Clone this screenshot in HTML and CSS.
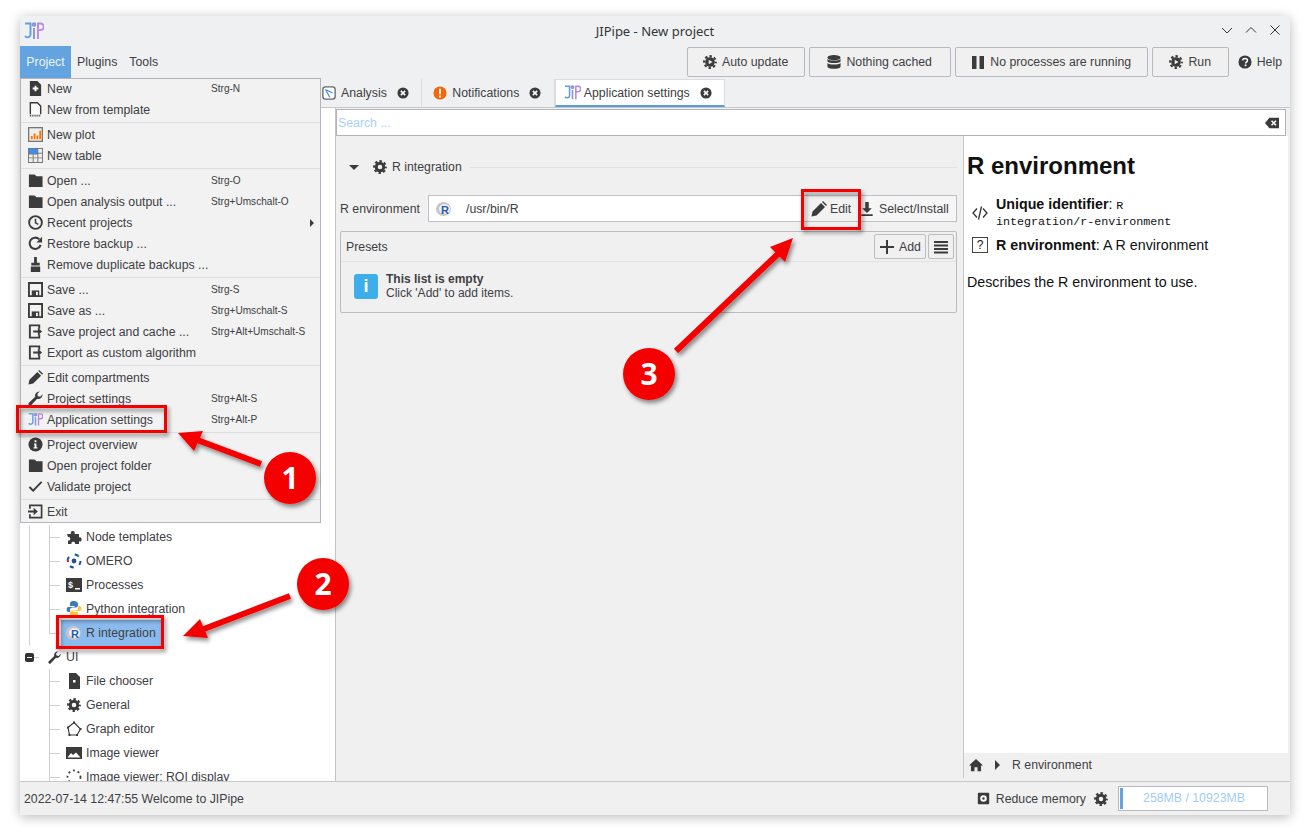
FILE: index.html
```html
<!DOCTYPE html>
<html lang="en">
<head>
  <meta charset="UTF-8" />
  <title>JIPipe - New project</title>
  <link rel="stylesheet" href="styles.css">
</head>
<body>
  <!-- icon set -->
  <svg class="sprite" width="0" height="0">
    <symbol id="i-logo" viewBox="0 0 20 18">
      <g fill="none" stroke-width="1.900">
        <path d="M1 1.500h5.500v11a3 3 0 0 1-5.500 1.500" stroke="#5f9fe0"/>
        <path d="M10 6v11" stroke="#8b8fe0"/>
        <circle cx="10" cy="2.600" r="1.300" stroke="#8b8fe0"/>
        <path d="M14 17V1.500h2.500a3.200 3.200 0 0 1 0 6.600H14" stroke="#b48be0"/>
      </g>
    </symbol>
    <symbol id="i-new" viewBox="0 0 16 16">
      <path d="M2 0h8l4 4v12H2z" fill="#3b3b3b"/>
      <path d="M7 5h2v2h2v2H9v2H7V9H5V7h2z" fill="#fff"/>
    </symbol>
    <symbol id="i-template" viewBox="0 0 16 16">
      <path d="M2.500 13V.8h7.500l3.500 3.500V13" fill="#fff" stroke="#3b3b3b" stroke-width="1.500"/>
      <path d="M2 14.500h12" stroke="#3b3b3b" stroke-width="2" stroke-dasharray="1 1"/>
    </symbol>
    <symbol id="i-plot" viewBox="0 0 16 16">
      <rect x=".7" y=".7" width="14.600" height="14.600" fill="#eee" stroke="#777" stroke-width="1.400"/>
      <path d="M3 9.500h2V13H3zM6 7h2v6H6zM9 9h2v4H9zM12 4h2v9h-2z" fill="#f57900"/>
    </symbol>
    <symbol id="i-table" viewBox="0 0 16 16">
      <rect width="16" height="16" fill="#777"/>
      <path d="M1 1h9v5H1z" fill="#3d8df0"/>
      <path d="M11 1h4v4h-4zM11 6h4v4h-4zM11 11h4v4h-4zM1 7h4v3H1zM6 7h4v3H6zM1 11h4v4H1zM6 11h4v4H6z" fill="#eee"/>
    </symbol>
    <symbol id="i-folder" viewBox="0 0 16 16">
      <path d="M1 1.500h6l2 2h6.500v11.500H1z" fill="#3b3b3b"/>
    </symbol>
    <symbol id="i-clock" viewBox="0 0 16 16">
      <circle cx="8" cy="8" r="6.800" fill="none" stroke="#3b3b3b" stroke-width="2"/>
      <path d="M8 4v4.300l3 1.700" fill="none" stroke="#3b3b3b" stroke-width="1.600"/>
    </symbol>
    <symbol id="i-restore" viewBox="0 0 16 16">
      <path d="M13.500 9.500A6 6 0 1 1 12 3.500" fill="none" stroke="#3b3b3b" stroke-width="2.200"/>
      <path d="M15 .8v6.200H9z" fill="#3b3b3b"/>
    </symbol>
    <symbol id="i-broom" viewBox="0 0 16 16">
      <path d="M6.500 0h3v6h-3zM3.500 6h9v3h-9zM3 10h10v6H3z" fill="#3b3b3b"/>
    </symbol>
    <symbol id="i-save" viewBox="0 0 16 16">
      <path d="M1 1h14v14H1z" fill="none" stroke="#3b3b3b" stroke-width="2"/>
      <path d="M4 9h8v6H4z" fill="#3b3b3b"/>
      <path d="M8.500 10.500h2V14h-2z" fill="#fff"/>
    </symbol>
    <symbol id="i-export" viewBox="0 0 16 16">
      <path d="M12 5V1.500H2v13h10V11" fill="none" stroke="#3b3b3b" stroke-width="2"/>
      <path d="M5.500 7h5V4l4.500 4-4.500 4V9h-5z" fill="#3b3b3b"/>
    </symbol>
    <symbol id="i-pencil" viewBox="0 0 16 16">
      <path d="M.5 15.500l1-5 8.500-8.500 4 4-8.500 8.500zM11 1l1-1 4 4-1 1z" fill="#3b3b3b"/>
    </symbol>
    <symbol id="i-wrench" viewBox="0 0 16 16">
      <path d="M15.500 3.500A4.500 4.500 0 0 1 9.800 8.300L3.500 15a1.700 1.700 0 0 1-2.500-2.500l6.700-6.300A4.500 4.500 0 0 1 12.500.5L10 3l.5 2.500L13 6z" fill="#3b3b3b"/>
    </symbol>
    <symbol id="i-info" viewBox="0 0 16 16">
      <circle cx="8" cy="8" r="7.500" fill="#3b3b3b"/>
      <path d="M7 3.500h2v2H7zM6.500 7H9v4h1v1.300H6V11h1V8.300h-.5z" fill="#fff"/>
    </symbol>
    <symbol id="i-check" viewBox="0 0 16 16">
      <path d="M1.500 8.500l4 4 9-9.500" fill="none" stroke="#3b3b3b" stroke-width="2"/>
    </symbol>
    <symbol id="i-exit" viewBox="0 0 16 16">
      <path d="M2 5V1.500h12.500v13H2V11" fill="none" stroke="#3b3b3b" stroke-width="1.800"/>
      <path d="M0 7h6V4l4.500 4L6 12V9H0z" fill="#3b3b3b"/>
    </symbol>
    <symbol id="i-gear" viewBox="0 0 16 16">
      <circle cx="8" cy="8" r="4.300" fill="none" stroke="#3b3b3b" stroke-width="3.400"/>
      <circle cx="8" cy="8" r="6.700" fill="none" stroke="#3b3b3b" stroke-width="2.400" stroke-dasharray="2.800 2.460" stroke-dashoffset="1.400"/>
    </symbol>
    <symbol id="i-run" viewBox="0 0 16 16">
      <circle cx="8" cy="8" r="5.500" fill="#3b3b3b"/>
      <circle cx="8" cy="8" r="6.700" fill="none" stroke="#3b3b3b" stroke-width="2.400" stroke-dasharray="2.800 2.460" stroke-dashoffset="1.400"/>
      <path d="M6.500 5.500L11 8l-4.500 2.500z" fill="#f0f0f0"/>
    </symbol>
    <symbol id="i-db" viewBox="0 0 16 16">
      <ellipse cx="8" cy="3" rx="7.500" ry="3" fill="#3b3b3b"/>
      <path d="M.5 4.700c2 2.300 13 2.300 15 0V7.500c-2 2.300-13 2.300-15 0zM.5 9.200c2 2.300 13 2.300 15 0V13c0 3.500-15 3.500-15 0z" fill="#3b3b3b"/>
    </symbol>
    <symbol id="i-help" viewBox="0 0 16 16">
      <circle cx="8" cy="8" r="7.500" fill="#3b3b3b"/>
      <path d="M5.300 6.200C5.500 3.400 10.700 3.300 10.800 6.200c0 2-2.200 1.800-2.200 3.400" fill="none" stroke="#fff" stroke-width="1.700"/>
      <path d="M7.600 10.800h2v2h-2z" fill="#fff"/>
    </symbol>
    <symbol id="i-close" viewBox="0 0 14 14">
      <circle cx="7" cy="7" r="6.500" fill="#3b3b3b"/>
      <path d="M4.500 4.500l5 5m0-5l-5 5" stroke="#fff" stroke-width="1.800"/>
    </symbol>
    <symbol id="i-graph" viewBox="0 0 16 16">
      <rect x="1" y="1" width="14" height="14" rx="3" fill="#fff" stroke="#666" stroke-width="1.500"/>
      <path d="M4 4l8 4M4 4l5 9" stroke="#3d8df0" stroke-width="1.300"/>
    </symbol>
    <symbol id="i-warn" viewBox="0 0 16 16">
      <circle cx="8" cy="8" r="7.500" fill="#f0670e"/>
      <path d="M7 3h2v6.500H7zM7 10.800h2V13H7z" fill="#fff"/>
    </symbol>
    <symbol id="i-clear" viewBox="0 0 16 16">
      <path d="M5 2h11v12H5L0 8z" fill="#3b3b3b"/>
      <path d="M7.500 5.500l5 5m0-5l-5 5" stroke="#fff" stroke-width="1.800"/>
    </symbol>
    <symbol id="i-download" viewBox="0 0 16 16">
      <path d="M6 0h4v7h3.500L8 12.500 2.500 7H6zM1.500 14h13v2h-13z" fill="#3b3b3b"/>
    </symbol>
    <symbol id="i-plus" viewBox="0 0 16 16">
      <path d="M7 1h2v6h6v2H9v6H7V9H1V7h6z" fill="#3b3b3b"/>
    </symbol>
    <symbol id="i-list" viewBox="0 0 16 16">
      <path d="M1 2h14v2H1zM1 5.500h14v2H1zM1 9h14v2H1zM1 12.500h14v2H1z" fill="#3b3b3b"/>
    </symbol>
    <symbol id="i-code" viewBox="0 0 16 16">
      <path d="M5 3.500L1 8l4 4.500M11 3.500L15 8l-4 4.500M9.500 1.500l-3 13" fill="none" stroke="#333" stroke-width="1.300"/>
    </symbol>
    <symbol id="i-home" viewBox="0 0 16 16">
      <path d="M8 1l8 7.500h-2.200V15H9.700v-4.500H6.300V15H2.200V8.500H0z" fill="#3b3b3b"/>
    </symbol>
    <symbol id="i-disk" viewBox="0 0 16 16">
      <rect x="1" y="1" width="14" height="14" rx="1" fill="#3b3b3b"/>
      <circle cx="8" cy="8" r="4" fill="#fff"/>
      <circle cx="8" cy="8" r="1.500" fill="#3b3b3b"/>
    </symbol>
    <symbol id="i-puzzle" viewBox="0 0 16 16">
      <path d="M1 5h4c-1.500-4 5-4 3.500 0H13v3.500c3.500-1.200 3.500 5 0 3.800V15H9c1-3-4.500-3-3.500 0H2v-3.500c3 1 3-4.500 0-3.500z" fill="#3b3b3b"/>
    </symbol>
    <symbol id="i-omero" viewBox="0 0 16 16">
      <circle cx="8" cy="8" r="2.400" fill="#1f4e9c"/>
      <circle cx="8" cy="8" r="6.500" fill="none" stroke-width="2" stroke="#1f4e9c" stroke-dasharray="4 6.200"/>
      <path d="M1 8h2" stroke="#d9302c" stroke-width="2"/>
      <path d="M11.500 2.500l1.500 1" stroke="#2a9d6a" stroke-width="2"/>
    </symbol>
    <symbol id="i-python" viewBox="0 0 16 16">
      <path d="M8 0C4 0 4 2 4 3v2h4.500v1H2.500C0 6 0 11 2.500 11H4V9c0-1.500 1-2.500 2.500-2.500h3.500C11 6.500 12 5.500 12 4V3c0-2-2-3-4-3z" fill="#3f7cb5"/>
      <path d="M8 16c4 0 4-2 4-3v-2H7.500v-1h6c2.500 0 2.500-5 0-5H12v2c0 1.500-1 2.500-2.500 2.500H6C5 9.500 4 10.500 4 12v1c0 2 2 3 4 3z" fill="#fbc93a"/>
    </symbol>
    <symbol id="i-graphedit" viewBox="0 0 16 16">
      <path d="M8 1.500l6.500 6.500-3.500 6H3.500L2 6.500z" fill="none" stroke="#3b3b3b" stroke-width="1.200"/>
      <path d="M7 .5h2v2H7zM13.500 7h2v2h-2zM10 13h2v2h-2zM2.500 13h2v2h-2zM1 5.500h2v2H1z" fill="#3b3b3b"/>
    </symbol>
    <symbol id="i-image" viewBox="0 0 16 16">
      <rect y="2" width="16" height="12" fill="#3b3b3b"/>
      <path d="M1.500 12.500L5 8l2 2 3-2.500 4.500 5z" fill="#fff"/>
    </symbol>
    <symbol id="i-roi" viewBox="0 0 16 16">
      <circle cx="8" cy="8" r="6.500" fill="none" stroke="#3b3b3b" stroke-width="1.800" stroke-dasharray="1.800 3"/>
    </symbol>
    <symbol id="i-file" viewBox="0 0 16 16">
      <path d="M3 0h7l4 4v12H3z" fill="#3b3b3b"/>
      <path d="M7 7h2.500v2.500H7z" fill="#fff"/>
    </symbol>
  </svg>

  <div class="window">
    <header class="titlebar">
      <svg class="title-logo"><use href="#i-logo"/></svg>
      <span class="title-text">JIPipe - New project</span>
      <div class="title-controls">
        <svg viewBox="0 0 12 12"><path d="M1 4l5 5 5-5"/></svg>
        <svg viewBox="0 0 12 12"><path d="M1 8.500l5-5 5 5"/></svg>
        <svg viewBox="0 0 12 12"><path d="M1.500 1.500l9 9m0-9l-9 9"/></svg>
      </div>
    </header>

    <div class="toolbar">
      <span class="menu-title active">Project</span>
      <span class="menu-title">Plugins</span>
      <span class="menu-title">Tools</span>
      <div class="toolbar-right">
        <button class="tool-btn w-update"><svg class="ico"><use href="#i-run"/></svg>Auto update</button>
        <button class="tool-btn w-cache"><svg class="ico"><use href="#i-db"/></svg>Nothing cached</button>
        <button class="tool-btn w-proc"><svg class="ico"><path d="M1 1h4.500v13H1zM8.500 1H13v13H8.500z" fill="#3b3b3b"/></svg>No processes are running</button>
        <button class="tool-btn w-run"><svg class="ico"><use href="#i-run"/></svg>Run</button>
        <span class="help-link"><svg class="ico"><use href="#i-help"/></svg>Help</span>
      </div>
    </div>

    <div class="tabs">
      <div class="tab"><svg class="ico"><use href="#i-graph"/></svg>Analysis<svg class="tab-close"><use href="#i-close"/></svg></div>
      <div class="tab"><svg class="ico"><use href="#i-warn"/></svg>Notifications<svg class="tab-close"><use href="#i-close"/></svg></div>
      <div class="tab tab-active"><svg class="ico-logo"><use href="#i-logo"/></svg>Application settings<svg class="tab-close"><use href="#i-close"/></svg></div>
    </div>

    <div class="main">
      <aside class="tree">
        <div class="tree-outer">
          <div class="tree-group">
            <div class="tree-row"><i class="tick"></i><svg class="ico"><use href="#i-puzzle"/></svg>Node templates</div>
            <div class="tree-row"><i class="tick"></i><svg class="ico"><use href="#i-omero"/></svg>OMERO</div>
            <div class="tree-row"><i class="tick"></i>
              <svg class="ico" viewBox="0 0 16 16"><rect width="16" height="14" y="1" fill="#3b3b3b"/><path d="M9 11h5v1.500H9z" fill="#fff"/><text x="2" y="11" class="term-letter">$</text></svg>Processes</div>
            <div class="tree-row"><i class="tick"></i><svg class="ico"><use href="#i-python"/></svg>Python integration</div>
            <div class="tree-row"><i class="tick last"></i><span class="tree-selected">
              <svg class="ico" viewBox="0 0 16 16"><ellipse cx="7.500" cy="8" rx="7.500" ry="7" fill="#c4c6ca"/><ellipse cx="8.500" cy="8" rx="5.500" ry="4.800" fill="#f2f2f2"/><text x="5" y="12.500" class="r-letter">R</text></svg>R integration</span></div>
          </div>
        </div>
        <div class="tree-parent">
          <i class="handle"></i><i class="handle-tick"></i>
          <svg class="ico-small"><use href="#i-wrench"/></svg>UI
        </div>
        <div class="tree-group tree-group-b">
          <div class="tree-row"><i class="tick"></i><svg class="ico"><use href="#i-file"/></svg>File chooser</div>
          <div class="tree-row"><i class="tick"></i><svg class="ico ico-gear"><use href="#i-gear"/></svg>General</div>
          <div class="tree-row"><i class="tick"></i><svg class="ico"><use href="#i-graphedit"/></svg>Graph editor</div>
          <div class="tree-row"><i class="tick"></i><svg class="ico"><use href="#i-image"/></svg>Image viewer</div>
          <div class="tree-row"><i class="tick"></i><svg class="ico"><use href="#i-roi"/></svg>Image viewer: ROI display</div>
        </div>
      </aside>

      <section class="content">
        <div class="search">
          <span class="search-hint">Search ...</span>
          <svg class="ico-clear"><use href="#i-clear"/></svg>
        </div>
        <div class="split">
          <div class="settings">
            <div class="section-head">
              <i class="caret-down"></i>
              <svg class="ico"><use href="#i-gear"/></svg>
              <span>R integration</span>
              <i class="section-line"></i>
            </div>
            <div class="env-row">
              <span class="env-label">R environment</span>
              <div class="env-field">
                <svg class="ico" viewBox="0 0 16 16"><ellipse cx="7.500" cy="8" rx="7.500" ry="7" fill="#c4c6ca"/><ellipse cx="8.500" cy="8" rx="5.500" ry="4.800" fill="#f2f2f2"/><text x="5" y="12.500" class="r-letter">R</text></svg>
                <span class="env-path">/usr/bin/R</span>
                <span class="env-btn env-edit"><svg class="ico"><use href="#i-pencil"/></svg>Edit</span>
                <span class="env-btn env-select"><svg class="ico"><use href="#i-download"/></svg>Select/Install</span>
              </div>
            </div>
            <div class="presets">
              <div class="presets-head">
                <span>Presets</span>
                <span class="small-btn add-btn"><svg class="ico"><use href="#i-plus"/></svg>Add</span>
                <span class="small-btn list-btn"><svg class="ico"><use href="#i-list"/></svg></span>
              </div>
              <div class="presets-empty">
                <span class="info-box">i</span>
                <div><b>This list is empty</b><br>Click 'Add' to add items.</div>
              </div>
            </div>
          </div>
          <div class="doc">
            <div class="doc-body">
              <h1>R environment</h1>
              <div class="doc-item">
                <svg class="ico"><use href="#i-code"/></svg>
                <div><b>Unique identifier</b>: <code>R<br>integration/r-environment</code></div>
              </div>
              <div class="doc-item doc-item-b">
                <span class="doc-q">?</span>
                <div><b>R environment</b>: A R environment</div>
              </div>
              <p>Describes the R environment to use.</p>
            </div>
            <div class="crumbs">
              <svg class="ico"><use href="#i-home"/></svg>
              <i class="caret-right"></i>
              <span>R environment</span>
            </div>
          </div>
        </div>
      </section>
    </div>

    <footer class="status">
      <span>2022-07-14 12:47:55 Welcome to JIPipe</span>
      <div class="status-right">
        <svg class="ico-mem"><use href="#i-disk"/></svg>
        <span>Reduce memory</span>
        <svg class="ico"><use href="#i-gear"/></svg>
        <div class="memory"><i class="memory-bar"></i>258MB / 10923MB</div>
      </div>
    </footer>

    <!-- open Project menu -->
    <nav class="menu">
      <div class="menu-row"><svg class="ico"><use href="#i-new"/></svg><span class="label">New</span><span class="key">Strg-N</span></div>
      <div class="menu-row"><svg class="ico"><use href="#i-template"/></svg><span class="label">New from template</span></div>
      <hr>
      <div class="menu-row"><svg class="ico"><use href="#i-plot"/></svg><span class="label">New plot</span></div>
      <div class="menu-row"><svg class="ico"><use href="#i-table"/></svg><span class="label">New table</span></div>
      <hr>
      <div class="menu-row"><svg class="ico"><use href="#i-folder"/></svg><span class="label">Open ...</span><span class="key">Strg-O</span></div>
      <div class="menu-row"><svg class="ico"><use href="#i-folder"/></svg><span class="label">Open analysis output ...</span><span class="key">Strg+Umschalt-O</span></div>
      <div class="menu-row"><svg class="ico"><use href="#i-clock"/></svg><span class="label">Recent projects</span><i class="caret-right submenu"></i></div>
      <div class="menu-row"><svg class="ico"><use href="#i-restore"/></svg><span class="label">Restore backup ...</span></div>
      <div class="menu-row"><svg class="ico"><use href="#i-broom"/></svg><span class="label">Remove duplicate backups ...</span></div>
      <hr>
      <div class="menu-row"><svg class="ico"><use href="#i-save"/></svg><span class="label">Save ...</span><span class="key">Strg-S</span></div>
      <div class="menu-row"><svg class="ico"><use href="#i-save"/></svg><span class="label">Save as ...</span><span class="key">Strg+Umschalt-S</span></div>
      <div class="menu-row"><svg class="ico"><use href="#i-export"/></svg><span class="label">Save project and cache ...</span><span class="key">Strg+Alt+Umschalt-S</span></div>
      <div class="menu-row"><svg class="ico"><use href="#i-export"/></svg><span class="label">Export as custom algorithm</span></div>
      <hr>
      <div class="menu-row"><svg class="ico"><use href="#i-pencil"/></svg><span class="label">Edit compartments</span></div>
      <div class="menu-row"><svg class="ico"><use href="#i-wrench"/></svg><span class="label">Project settings</span><span class="key">Strg+Alt-S</span></div>
      <div class="menu-row"><svg class="ico"><use href="#i-logo"/></svg><span class="label">Application settings</span><span class="key">Strg+Alt-P</span></div>
      <hr>
      <div class="menu-row"><svg class="ico"><use href="#i-info"/></svg><span class="label">Project overview</span></div>
      <div class="menu-row"><svg class="ico"><use href="#i-folder"/></svg><span class="label">Open project folder</span></div>
      <div class="menu-row"><svg class="ico"><use href="#i-check"/></svg><span class="label">Validate project</span></div>
      <hr>
      <div class="menu-row"><svg class="ico"><use href="#i-exit"/></svg><span class="label">Exit</span></div>
    </nav>
  </div>

  <!-- red tutorial annotations on top of the screenshot -->
  <svg class="marks" viewBox="0 0 1310 839">
    <defs>
      <filter id="soft" x="-30%" y="-30%" width="160%" height="160%">
        <feDropShadow dx="2" dy="3" stdDeviation="2" flood-color="#000" flood-opacity=".45"/>
      </filter>
    </defs>
    <g filter="url(#soft)">
      <rect class="mark-box" x="17.500" y="406.500" width="148" height="25"/>
      <rect class="mark-box" x="57.500" y="616.500" width="105" height="31"/>
      <rect class="mark-box" x="802.500" y="190.500" width="57" height="38"/>
      <path class="mark-line" d="M261 464L192 438"/>
      <path class="mark-head" d="M178 433L203 431L194 451z"/>
      <path class="mark-line" d="M290 596L196 632"/>
      <path class="mark-head" d="M183 636L200 619L208 638z"/>
      <path class="mark-line" d="M676 351L780 252"/>
      <path class="mark-head" d="M793 238L770 247L785 262z"/>
      <circle class="mark-dot" cx="290" cy="478" r="26"/>
      <circle class="mark-dot" cx="323" cy="584" r="26"/>
      <circle class="mark-dot" cx="649" cy="374" r="26"/>
    </g>
    <text class="mark-num" x="290" y="489">1</text>
    <text class="mark-num" x="323" y="595">2</text>
    <text class="mark-num" x="649" y="385">3</text>
  </svg>
</body>
</html>
```

FILE: styles.css
```css
* {
  box-sizing: border-box;
}
body {
  margin: 0;
  width: 1310px;
  height: 839px;
  padding: 16px 20px 24px;
  background-color: #fff;
  font-family: "Liberation Sans", Arial, sans-serif;
  font-size: 12.3px;
  color: #404044;
  overflow: hidden;
  position: relative;
}
.sprite {
  position: absolute;
}
.ico, .ico-small, .ico-logo, .ico-mem, .tab-close, .ico-clear {
  flex: none;
  display: block;
}
.ico {
  width: 14px;
  height: 14px;
}
.r-letter {
  font: bold 11px "Liberation Sans", sans-serif;
  fill: #1f5fae;
}
.term-letter {
  font: bold 9px "Liberation Sans", sans-serif;
  fill: #fff;
}

.window {
  position: relative;
  width: 1270px;
  height: 799px;
  display: flex;
  flex-direction: column;
  background-color: #f0f0f0;
  border-radius: 4px 4px 0 0;
  box-shadow: 0 2px 12px rgba(0,0,0,0.28);
  overflow: visible;
}

/* title bar */
.titlebar {
  height: 30px;
  flex: none;
  position: relative;
  display: flex;
  align-items: center;
  justify-content: center;
  background-color: #eff0f1;
  border-radius: 4px 4px 0 0;
  font-family: "Noto Sans", sans-serif;
  font-size: 13px;
  color: #31363b;
}
.title-logo {
  position: absolute;
  left: 4px;
  top: 6px;
  width: 20px;
  height: 18px;
}
.title-controls {
  position: absolute;
  right: 9px;
  top: 8px;
  display: flex;
  gap: 12px;
}
.title-controls svg {
  width: 12px;
  height: 12px;
  fill: none;
  stroke: #31363b;
  stroke-width: 1;
}

/* toolbar */
.toolbar {
  height: 33px;
  flex: none;
  display: flex;
  background-color: #eff0f1;
}
.menu-title {
  padding: 0 6px;
  line-height: 32px;
  height: 32px;
}
.menu-title.active {
  width: 51px;
  text-align: center;
  padding: 0;
  background-color: #62a3e0;
  color: #eef5fc;
}
.toolbar-right {
  margin-left: auto;
  padding: 1px 8px 0 0;
  display: flex;
  gap: 4px;
  align-items: flex-start;
}
.tool-btn {
  height: 30px;
  display: flex;
  align-items: center;
  justify-content: center;
  gap: 5px;
  font: inherit;
  color: inherit;
  background-color: #f0f0f0;
  border: 1px solid #b9b9bd;
  border-radius: 2px;
  padding: 0;
}
.w-update { width: 118px; }
.w-cache { width: 142px; }
.w-proc { width: 193px; }
.w-run { width: 77px; }
.help-link {
  display: flex;
  align-items: center;
  gap: 5px;
  height: 30px;
  margin-left: 5px;
}

/* tabs */
.tabs {
  height: 29px;
  flex: none;
  display: flex;
  padding-left: 291px;
  background-color: #eff0f1;
  border-bottom: 1px solid #c8c8cc;
  white-space: nowrap;
}
.tab {
  display: flex;
  align-items: center;
  gap: 5px;
  padding: 0 12.5px 0 11px;
  border-right: 1px solid #dcdcdf;
}
.ico-logo {
  width: 17px;
  height: 15px;
}
.tab-close {
  width: 12px;
  height: 12px;
  margin-left: 5px;
}
.tab-active {
  background-color: #fff;
  padding: 0 0 0 8px;
  gap: 3px;
  border: 1px solid #dcdcdf;
  border-bottom: 2px solid #5b9bd8;
  width: 170px;
  height: 28px;
}
.tab-active .tab-close {
  margin-left: 7px;
}

/* body of the window */
.main {
  flex: 1;
  display: flex;
  min-height: 0;
}
.tree {
  width: 316px;
  flex: none;
  padding-top: 417px;
  background-color: #fff;
  border-right: 1px solid #c4c4c8;
  overflow: hidden;
  white-space: nowrap;
}
.tree-outer {
  margin-left: 9px;
  border-left: 1px solid #d0d0d0;
}
.tree-group {
  margin-left: 19px;
}
.tree-group-b {
  margin-left: 29px;
}
.tree-row {
  height: 24px;
  display: flex;
  align-items: center;
  gap: 6px;
}
.tick {
  align-self: stretch;
  width: 11px;
  flex: none;
  background:
    linear-gradient(#d0d0d0, #d0d0d0) 0 0 / 1px 100% no-repeat,
    linear-gradient(#d0d0d0, #d0d0d0) 0 12px / 100% 1px no-repeat;
}
.tick.last {
  background:
    linear-gradient(#d0d0d0, #d0d0d0) 0 0 / 1px 12px no-repeat,
    linear-gradient(#d0d0d0, #d0d0d0) 0 12px / 100% 1px no-repeat;
}
.tree-row .ico {
  width: 16px;
  height: 16px;
  margin-right: -2px;
}
.tree-row .ico-gear {
  width: 14px;
  height: 14px;
  margin: 0 -1px 0 1px;
}
.tree-selected {
  display: flex;
  align-items: center;
  gap: 4px;
  width: 100px;
  height: 27px;
  margin-left: -5px;
  padding-left: 5px;
  background-color: #8bbbee;
}
.tree-selected .ico {
  margin-right: 0;
}
.tree-parent {
  height: 24px;
  display: flex;
  align-items: center;
  padding-left: 5px;
}
.handle {
  width: 9px;
  height: 9px;
  flex: none;
  border-radius: 2px;
  background: linear-gradient(#fff, #fff) center / 5px 1px no-repeat, #333;
}
.handle-tick {
  width: 5px;
  height: 1px;
  flex: none;
  background-color: #d0d0d0;
  margin-right: 9px;
}
.ico-small {
  width: 13px;
  height: 13px;
  margin-right: 5px;
}
.content {
  flex: 1;
  min-width: 0;
  padding: 1px 2px 3px 0;
  display: flex;
  flex-direction: column;
}
.search {
  height: 27px;
  flex: none;
  margin-right: 2px;
  display: flex;
  align-items: center;
  justify-content: space-between;
  padding: 0 5px 0 1px;
  background-color: #fff;
  border: 1px solid #b4b4b8;
}
.search-hint {
  color: #a8d0fa;
}
.ico-clear {
  width: 16px;
  height: 14px;
}
.split {
  flex: 1;
  display: flex;
  min-height: 0;
}
.settings {
  width: 627px;
  flex: none;
  padding: 0 6px 0 4px;
}
.section-head {
  height: 30px;
  margin-top: 16px;
  display: flex;
  align-items: center;
  gap: 5px;
  padding-left: 9px;
}
.caret-down {
  width: 0;
  height: 0;
  border: 5px solid transparent;
  border-top-color: #3b3b3b;
  border-bottom: 0;
  margin-right: 9px;
}
.section-line {
  flex: 1;
  height: 1px;
  background-color: #e0e0e0;
  margin-left: 3px;
}
.env-row {
  display: flex;
  align-items: center;
  margin-top: 13px;
  gap: 8px;
}
.env-field {
  flex: 1;
  height: 27px;
  display: flex;
  align-items: center;
  padding-left: 7px;
  background-color: #fff;
  border: 1px solid #c0c0c4;
}
.env-field > .ico {
  width: 16px;
  height: 16px;
}
.env-path {
  flex: 1;
  margin-left: 14px;
}
.env-btn {
  height: 25px;
  display: flex;
  align-items: center;
  gap: 3px;
  background-color: #f2f2f2;
}
.env-btn .ico {
  width: 16px;
  height: 16px;
}
.env-edit {
  width: 50px;
  padding-left: 4px;
  margin-right: 4px;
}
.env-select {
  width: 95px;
  background-color: #f6f6f6;
}
.env-select .ico {
  margin: 0 2px 0 -1px;
  width: 14px;
  height: 14px;
}
.presets {
  margin-top: 9px;
  height: 82px;
  border: 1px solid #bcbcc0;
  border-radius: 2px;
}
.presets-head {
  height: 30px;
  display: flex;
  align-items: center;
  gap: 2px;
  padding: 0 2px 0 5px;
  border-bottom: 1px solid #e2e2e2;
}
.presets-head > span:first-child {
  margin-right: auto;
}
.small-btn {
  height: 25px;
  display: flex;
  align-items: center;
  justify-content: center;
  gap: 4px;
  border: 1px solid #bcbcc0;
  border-radius: 2px;
}
.small-btn .ico {
  width: 16px;
  height: 16px;
}
.add-btn { width: 52px; }
.list-btn { width: 26px; }
.presets-empty {
  display: flex;
  align-items: center;
  gap: 8px;
  padding: 10px 13px;
  font-size: 12px;
  line-height: 14px;
}
.info-box {
  width: 24px;
  height: 25px;
  flex: none;
  border-radius: 3px;
  background-color: #3daee9;
  color: #fff;
  font: bold 18px/25px "Liberation Sans", sans-serif;
  text-align: center;
}

/* help text on the right */
.doc {
  flex: 1;
  display: flex;
  flex-direction: column;
  border-left: 1px solid #c8c8cc;
}
.doc-body {
  flex: 1;
  background-color: #fff;
  padding: 16px 3px;
  color: #111;
  font-size: 14.25px;
}
.doc h1 {
  margin: 0 0 17px;
  font-size: 24px;
  line-height: 28px;
}
.doc-item {
  display: flex;
  align-items: center;
  gap: 8px;
  padding-left: 5px;
}
.doc-item .ico {
  width: 16px;
  height: 16px;
}
.doc-item code {
  font-family: "Liberation Mono", monospace;
  font-size: 11.7px;
}
.doc-item > div {
  line-height: 14px;
}
.doc-item-b {
  margin-top: 8px;
}
.doc-q {
  width: 16px;
  height: 16px;
  flex: none;
  border: 1px solid #444;
  text-align: center;
  font-size: 12px;
  line-height: 14px;
}
.doc p {
  margin: 21px 0 0;
}
.crumbs {
  height: 25px;
  flex: none;
  display: flex;
  align-items: center;
  padding: 0 0 2px 5px;
  gap: 12px;
}
.caret-right {
  width: 0;
  height: 0;
  flex: none;
  border: 5px solid transparent;
  border-left-color: #3b3b3b;
  border-right: 0;
}

/* status bar */
.status {
  height: 34px;
  flex: none;
  display: flex;
  align-items: center;
  justify-content: space-between;
  padding: 0 22px 0 4px;
  background-color: #f0f0f0;
  border-top: 1px solid #c8c8cc;
}
.status-right {
  display: flex;
  align-items: center;
  gap: 6px;
}
.ico-mem {
  width: 13px;
  height: 13px;
}
.status-right .ico {
  margin: 0 4px 0 2px;
}
.memory {
  position: relative;
  width: 150px;
  height: 25px;
  padding-left: 2px;
  line-height: 23px;
  text-align: center;
  color: #a0cbf7;
  background-color: #fff;
  border: 1px solid #b8b8c0;
}
.memory-bar {
  position: absolute;
  left: 1px;
  top: 1px;
  bottom: 1px;
  width: 3px;
  background-color: #62a3e0;
}

/* the open menu lies over the tabs and the tree */
.menu {
  position: absolute;
  left: 0;
  top: 62px;
  width: 301px;
  height: 445px;
  background-color: #f2f2f2;
  border: 1px solid #b4b4bc;
}
.menu hr {
  margin: 1px 0 2px;
  border: 0;
  border-top: 1px solid #dedee0;
}
.menu-row {
  height: 21px;
  display: flex;
  align-items: center;
  padding: 0 0 2px 7px;
  position: relative;
}
.menu-row .ico {
  width: 15px;
  height: 15px;
}
.menu-row .label {
  margin-left: 4px;
  width: 164px;
  flex: none;
}
.key {
  font-size: 10.1px;
}
.submenu {
  margin-left: auto;
  margin-right: 6px;
  border-width: 4px;
}

/* annotations */
.marks {
  position: absolute;
  left: 0;
  top: 0;
  width: 1310px;
  height: 839px;
}
.mark-box {
  fill: none;
  stroke: #f50000;
  stroke-width: 3;
}
.mark-line {
  fill: none;
  stroke: #f50000;
  stroke-width: 6;
}
.mark-head, .mark-dot {
  fill: #f50000;
}
.mark-num {
  font: bold 30px "Open Sans", sans-serif;
  fill: #fff;
  text-anchor: middle;
}
```
